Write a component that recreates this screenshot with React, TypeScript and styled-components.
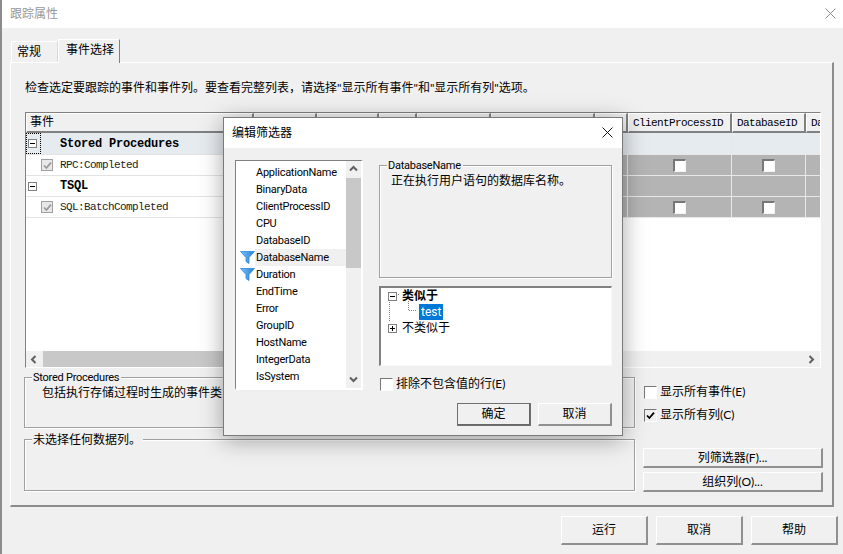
import React from 'react';
import styled, { createGlobalStyle } from 'styled-components';

const UI_FONT = `Lato, "Noto Sans CJK SC", sans-serif`;
const LATIN_FONT = `Roboto, sans-serif`;
const GRID_FONT = `"Liberation Mono", "Noto Sans CJK SC", monospace`;

const GlobalStyle = createGlobalStyle`
	html, body { margin: 0; padding: 0; background: #f0f0f0; overflow: hidden; }
	* { box-sizing: border-box; }
`;

const Page = styled.div`
	position: relative;
	width: 843px;
	height: 554px;
	background: #f0f0f0;
	border-left: 2px solid #8c8c8c;
	font: 12px/16px ${UI_FONT};
	color: #000;
	overflow: hidden;
`;

const TitleBar = styled.div`
	height: 28px;
	background: #fff;
	display: flex;
	align-items: center;
	justify-content: space-between;
	padding: 0 7px 1px 8px;
	color: #999;
`;

const TabStrip = styled.div`
	height: 34px;
	display: flex;
	align-items: flex-end;
	padding-left: 9px;
`;

const Tab = styled.div<{ $active?: boolean }>`
	position: relative;
	width: ${({ $active }) => ($active ? '62px' : '47px')};
	height: ${({ $active }) => ($active ? '24px' : '21px')};
	margin-bottom: ${({ $active }) => ($active ? '-1px' : '0')};
	padding: ${({ $active }) => ($active ? '2px 0 0 7px' : '2px 0 0 5px')};
	background: #f0f0f0;
	border-top: 1px solid #fff;
	border-left: 1px solid #fff;
	border-right: 1px solid ${({ $active }) => ($active ? '#808080' : '#d8d8d8')};
	z-index: ${({ $active }) => ($active ? 1 : 0)};
`;

const TabPanel = styled.div`
	width: 824px;
	height: 445px;
	margin-left: 8px;
	padding: 17px 0 0 14px;
	border-top: 1px solid #fff;
	border-left: 1px solid #fff;
	border-right: 2px solid #8c8c8c;
	border-bottom: 2px solid #8c8c8c;
	display: flex;
	flex-direction: column;
`;

const Description = styled.div`
	height: 16px;
	margin-bottom: 16px;
`;

const EventGrid = styled.div`
	width: 796px;
	height: 256px;
	border-top: 1px solid #808080;
	border-left: 1px solid #808080;
	border-right: 1px solid #fff;
	border-bottom: 1px solid #fff;
	background: #fff;
	display: flex;
	flex-direction: column;
	overflow: hidden;
	flex: none;
`;

const GridBody = styled.div`
	flex: 1;
	font: 11px/16px ${GRID_FONT};
	letter-spacing: -0.6px;
	overflow: hidden;
`;

const HeaderRow = styled.div`
	display: flex;
	height: 20px;
`;

const HeaderCell = styled.div<{ $w: number }>`
	flex: none;
	width: ${({ $w }) => $w}px;
	padding: 1px 0 0 4px;
	background: #f0f0f0;
	border-top: 1px solid #fff;
	border-left: 1px solid #fff;
	border-right: 2px solid #808080;
	border-bottom: 2px solid #808080;
	white-space: nowrap;
	overflow: hidden;
`;

const EventHeader = styled(HeaderCell)`
	font: 12px/16px ${UI_FONT};
	letter-spacing: 0;
	padding: 0 0 0 3px;
`;

const Row = styled.div<{ $tall?: boolean }>`
	display: flex;
	height: ${({ $tall }) => ($tall ? '22px' : '21px')};
`;

const NameCell = styled.div<{ $w: number; $selected?: boolean }>`
	position: relative;
	flex: none;
	width: ${({ $w }) => $w}px;
	display: flex;
	align-items: center;
	background: ${({ $selected }) => ($selected ? '#e6ebf0' : '#fff')};
	border-bottom: 1px solid #e3e3e3;
`;

const DataCell = styled.div<{ $w: number; $tone: 'selected' | 'shaded' }>`
	flex: none;
	width: ${({ $w }) => $w}px;
	display: flex;
	align-items: center;
	justify-content: center;
	background: ${({ $tone }) => ($tone === 'selected' ? '#e6ebf0' : '#b4b4b4')};
	border-bottom: 1px solid #e8e8e8;
	border-right: 1px solid #e8e8e8;
`;

const GroupName = styled.span`
	margin-left: 23px;
	font: bold 12px/16px ${GRID_FONT};
	letter-spacing: -0.2px;
`;

const EventName = styled.span`
	margin-left: 7px;
	color: #222;
`;

const Expander = styled.span`
	flex: none;
	width: 9px;
	height: 9px;
	margin-left: 2px;
	border: 1px solid #808080;
	background: #fff;
	display: flex;
	align-items: center;
	justify-content: center;
	&::before {
		content: '';
		width: 5px;
		height: 1px;
		background: #000;
	}
`;

const PlusExpander = styled(Expander)`
	position: relative;
	&::after {
		content: '';
		position: absolute;
		left: 3px;
		top: 1px;
		width: 1px;
		height: 5px;
		background: #000;
	}
`;

const FocusBox = styled.span`
	position: absolute;
	left: 0;
	top: 0;
	width: 15px;
	height: 100%;
	border: 1px dotted #000;
`;

const DisabledCheck = styled.span`
	flex: none;
	width: 12px;
	height: 12px;
	margin-left: 15px;
	border: 1px solid #a0a0a0;
	background: #e8e8e8;
	display: flex;
	align-items: center;
	justify-content: center;
`;

const CellCheck = styled.span`
	width: 13px;
	height: 13px;
	background: #fff;
	border-top: 2px solid #777;
	border-left: 2px solid #777;
	border-right: 1px solid #f4f4f4;
	border-bottom: 1px solid #f4f4f4;
`;

const HScroll = styled.div`
	flex: none;
	height: 16px;
	display: flex;
	align-items: center;
	justify-content: space-between;
	background: #f0f0f0;
`;

const HThumb = styled.div`
	width: 560px;
	height: 16px;
	background: #c8c8c8;
`;

const ScrollArrow = styled.span`
	flex: none;
	width: 17px;
	height: 16px;
	display: flex;
	align-items: center;
	justify-content: center;
`;

const HScrollStart = styled.div`
	display: flex;
	align-items: center;
`;

const Lower = styled.div`
	display: flex;
	margin-top: 9px;
	margin-left: -1px;
`;

const LowerLeft = styled.div`
	width: 611px;
	display: flex;
	flex-direction: column;
	gap: 11px;
`;

const GroupBox = styled.div<{ $h: number; $inset?: number }>`
	position: relative;
	height: ${({ $h }) => $h}px;
	border: 1px solid #a0a0a0;
	box-shadow: 1px 1px 0 #fff, inset 1px 1px 0 #fff;
	padding: 7px 0 0 ${({ $inset }) => $inset ?? 17}px;
`;

const Legend = styled.span<{ $latin?: boolean }>`
	position: absolute;
	left: 7px;
	top: -8px;
	padding: 0 2px 0 1px;
	background: #f0f0f0;
	white-space: nowrap;
	font-family: ${({ $latin }) => ($latin ? LATIN_FONT : UI_FONT)};
	font-size: ${({ $latin }) => ($latin ? '11px' : '12px')};
	letter-spacing: ${({ $latin }) => ($latin ? '-0.25px' : '0')};
`;

const LowerRight = styled.div`
	width: 180px;
	margin-left: 8px;
	display: flex;
	flex-direction: column;
`;

const CheckRow = styled.label`
	display: flex;
	align-items: center;
	gap: 3px;
	height: 16px;
	white-space: nowrap;
`;

const RightChecks = styled.div`
	display: flex;
	flex-direction: column;
	gap: 7px;
	margin: 7px 0 0 1px;
`;

const CheckBox = styled.span<{ $checked?: boolean }>`
	flex: none;
	width: 13px;
	height: 13px;
	background: ${({ $checked }) => ($checked ? '#f0f0f0' : '#fff')};
	border-top: 1px solid #777;
	border-left: 1px solid #777;
	border-right: 1px solid #fff;
	border-bottom: 1px solid #fff;
	display: flex;
	align-items: center;
	justify-content: center;
`;

const Button = styled.div<{ $default?: boolean }>`
	display: flex;
	align-items: center;
	justify-content: center;
	background: #f0f0f0;
	border-top: 1px solid #fff;
	border-left: 1px solid #fff;
	border-right: 2px solid ${({ $default }) => ($default ? '#666' : '#909090')};
	border-bottom: 2px solid ${({ $default }) => ($default ? '#666' : '#909090')};
	outline: ${({ $default }) => ($default ? '1px solid #707070' : 'none')};
	outline-offset: -1px;
`;

const WideButton = styled(Button)`
	height: 20px;
`;

const WideButtons = styled.div`
	display: flex;
	flex-direction: column;
	gap: 4px;
	margin-top: 25px;
`;

const Footer = styled.div`
	display: flex;
	justify-content: flex-end;
	gap: 8px;
	padding: 9px 5px 0 0;
`;

const FooterButton = styled(Button)`
	width: 87px;
	height: 29px;
`;

/* dialog floating over the properties window */
const Dialog = styled.div`
	position: absolute;
	left: 221px;
	top: 117px;
	width: 400px;
	height: 319px;
	background: #f0f0f0;
	border: 1px solid #7a7a7a;
	box-shadow: 0 4px 22px rgba(0, 0, 0, 0.35);
	display: flex;
	flex-direction: column;
`;

const DialogTitle = styled.div`
	flex: none;
	height: 30px;
	padding: 0 9px 1px 8px;
	background: #fff;
	display: flex;
	align-items: center;
	justify-content: space-between;
`;

const DialogBody = styled.div`
	display: flex;
	gap: 16px;
	padding: 12px 0 0 11px;
`;

const FieldList = styled.div`
	width: 128px;
	height: 230px;
	display: flex;
	background: #fff;
	border-top: 1px solid #808080;
	border-left: 1px solid #808080;
	border-right: 2px solid #fff;
	border-bottom: 2px solid #fff;
	flex: none;
`;

const FieldItems = styled.div`
	width: 110px;
	padding-top: 3px;
	flex: none;
`;

const FieldItem = styled.div`
	display: flex;
	align-items: center;
	height: 17px;
`;

const FieldIconSlot = styled.span`
	flex: none;
	width: 19px;
	height: 17px;
	display: flex;
	align-items: center;
	justify-content: center;
	padding-left: 4px;
`;

const FieldLabel = styled.span<{ $active?: boolean }>`
	flex: 1;
	height: 17px;
	padding-left: 1px;
	font: 11px/17px ${LATIN_FONT};
	letter-spacing: -0.25px;
	background: ${({ $active }) => ($active ? '#f0f0f0' : 'transparent')};
	white-space: nowrap;
`;

const VScroll = styled.div`
	width: 15px;
	background: #f0f0f0;
	display: flex;
	flex-direction: column;
	align-items: stretch;
`;

const VThumb = styled.div`
	height: 90px;
	background: #c8c8c8;
`;

const VSpacer = styled.div`
	flex: 1;
`;

const VArrow = styled.span`
	flex: none;
	height: 17px;
	display: flex;
	align-items: center;
	justify-content: center;
`;

const RightPane = styled.div`
	width: 233px;
	flex: none;
	display: flex;
	flex-direction: column;
	padding-top: 5px;
`;

const Tree = styled.div`
	position: relative;
	height: 80px;
	margin-top: 8px;
	padding: 0 0 0 5px;
	background: #fff;
	border-top: 2px solid #808080;
	border-left: 2px solid #808080;
	border-right: 1px solid #f8f8f8;
	border-bottom: 1px solid #f8f8f8;
`;

const TreeLines = styled.svg`
	position: absolute;
	left: 0;
	top: 0;
`;

const TreeRow = styled.div<{ $indent?: number }>`
	position: relative;
	display: flex;
	align-items: center;
	height: 16px;
	padding-left: ${({ $indent }) => $indent ?? 0}px;
`;

const TreeLabel = styled.span<{ $bold?: boolean; $selected?: boolean }>`
	margin-left: ${({ $selected }) => ($selected ? '0' : '5px')};
	padding: ${({ $selected }) => ($selected ? '0 2px' : '0')};
	font-weight: ${({ $bold }) => ($bold ? 700 : 400)};
	font-family: ${({ $selected }) => ($selected ? LATIN_FONT : UI_FONT)};
	background: ${({ $selected }) => ($selected ? '#0078d7' : 'transparent')};
	color: ${({ $selected }) => ($selected ? '#fff' : '#000')};
`;

const DialogCheck = styled.div`
	margin: 10px 0 0 1px;
`;

const DialogButtons = styled.div`
	display: flex;
	justify-content: flex-end;
	gap: 7px;
	margin-top: 11px;
`;

const DialogButton = styled(Button)`
	width: 74px;
	height: 23px;
`;

const Close = ({ size, color }: { size: number; color: string }) => (
	<svg width={size} height={size} viewBox="0 0 10 10">
		<path d="M0.5 0.5 L9.5 9.5 M9.5 0.5 L0.5 9.5" stroke={color} strokeWidth="0.9" fill="none" />
	</svg>
);

const Tick = ({ color }: { color: string }) => (
	<svg width="9" height="9" viewBox="0 0 9 9">
		<path d="M1 4.5 L3.4 7 L8 1.6" stroke={color} strokeWidth="1.8" fill="none" />
	</svg>
);

const Chevron = ({ dir }: { dir: 'left' | 'right' | 'up' | 'down' }) => {
	const paths = {
		left: 'M5.5 1 L2 4.5 L5.5 8',
		right: 'M2.5 1 L6 4.5 L2.5 8',
		up: 'M1 5.5 L4.5 2 L8 5.5',
		down: 'M1 2.5 L4.5 6 L8 2.5',
	};
	return (
		<svg width="9" height="9" viewBox="0 0 9 9">
			<path d={paths[dir]} stroke="#606060" strokeWidth="2" fill="none" />
		</svg>
	);
};

const Funnel = () => (
	<svg width="15" height="13" viewBox="0 0 15 13">
		<defs>
			<linearGradient id="funnel" x1="0" x2="1" y1="0" y2="0">
				<stop offset="0" stopColor="#7fc0f5" />
				<stop offset="1" stopColor="#1f7fdc" />
			</linearGradient>
		</defs>
		<path d="M0.5 0.5 H14.5 L9 6.5 V12.5 L6 10.5 V6.5 Z" fill="url(#funnel)" stroke="#2f86dc" strokeWidth="0.8" />
	</svg>
);

const columns = [228, 63, 62, 38, 74, 104, 33, 104, 74, 60];
const columnLabels = ['', '', '', '', '', '', '', 'ClientProcessID', 'DatabaseID', 'DatabaseName'];
const checkedColumns = [7, 8];

const fields = [
	'ApplicationName',
	'BinaryData',
	'ClientProcessID',
	'CPU',
	'DatabaseID',
	'DatabaseName',
	'Duration',
	'EndTime',
	'Error',
	'GroupID',
	'HostName',
	'IntegerData',
	'IsSystem',
];
const filteredFields = ['DatabaseName', 'Duration'];

const DataCells = ({ tone, checks }: { tone: 'selected' | 'shaded'; checks?: boolean }) => (
	<>
		{columns.slice(1).map((w, i) => (
			<DataCell key={i} $w={w} $tone={tone}>
				{checks && checkedColumns.includes(i + 1) && <CellCheck />}
			</DataCell>
		))}
	</>
);

const App = () => {
	return (
		<Page>
			<GlobalStyle />
			<TitleBar>
				<span>跟踪属性</span>
				<Close size={11} color="#8a8a8a" />
			</TitleBar>
			<TabStrip>
				<Tab>常规</Tab>
				<Tab $active>事件选择</Tab>
			</TabStrip>
			<TabPanel>
				<Description>检查选定要跟踪的事件和事件列。要查看完整列表，请选择"显示所有事件"和"显示所有列"选项。</Description>
				<EventGrid>
					<GridBody>
						<HeaderRow>
							<EventHeader $w={columns[0]}>事件</EventHeader>
							{columns.slice(1).map((w, i) => (
								<HeaderCell key={i} $w={w}>
									{columnLabels[i + 1]}
								</HeaderCell>
							))}
						</HeaderRow>
						<Row $tall>
							<NameCell $w={columns[0]} $selected>
								<FocusBox />
								<Expander />
								<GroupName>Stored Procedures</GroupName>
							</NameCell>
							<DataCells tone="selected" />
						</Row>
						<Row>
							<NameCell $w={columns[0]}>
								<DisabledCheck>
									<Tick color="#9a9a9a" />
								</DisabledCheck>
								<EventName>RPC:Completed</EventName>
							</NameCell>
							<DataCells tone="shaded" checks />
						</Row>
						<Row>
							<NameCell $w={columns[0]}>
								<Expander />
								<GroupName>TSQL</GroupName>
							</NameCell>
							<DataCells tone="shaded" />
						</Row>
						<Row>
							<NameCell $w={columns[0]}>
								<DisabledCheck>
									<Tick color="#9a9a9a" />
								</DisabledCheck>
								<EventName>SQL:BatchCompleted</EventName>
							</NameCell>
							<DataCells tone="shaded" checks />
						</Row>
					</GridBody>
					<HScroll>
						<HScrollStart>
							<ScrollArrow>
								<Chevron dir="left" />
							</ScrollArrow>
							<HThumb />
						</HScrollStart>
						<ScrollArrow>
							<Chevron dir="right" />
						</ScrollArrow>
					</HScroll>
				</EventGrid>
				<Lower>
					<LowerLeft>
						<GroupBox $h={51}>
							<Legend $latin>Stored Procedures</Legend>
							包括执行存储过程时生成的事件类
						</GroupBox>
						<GroupBox $h={52}>
							<Legend>未选择任何数据列。</Legend>
						</GroupBox>
					</LowerLeft>
					<LowerRight>
						<RightChecks>
							<CheckRow>
								<CheckBox />
								显示所有事件(E)
							</CheckRow>
							<CheckRow>
								<CheckBox $checked>
									<Tick color="#000" />
								</CheckBox>
								显示所有列(C)
							</CheckRow>
						</RightChecks>
						<WideButtons>
							<WideButton>列筛选器(F)...</WideButton>
							<WideButton>组织列(O)...</WideButton>
						</WideButtons>
					</LowerRight>
				</Lower>
			</TabPanel>
			<Footer>
				<FooterButton>运行</FooterButton>
				<FooterButton>取消</FooterButton>
				<FooterButton>帮助</FooterButton>
			</Footer>
			<Dialog>
				<DialogTitle>
					<span>编辑筛选器</span>
					<Close size={11} color="#111" />
				</DialogTitle>
				<DialogBody>
					<FieldList>
						<FieldItems>
							{fields.map((name) => (
								<FieldItem key={name}>
									<FieldIconSlot>{filteredFields.includes(name) && <Funnel />}</FieldIconSlot>
									<FieldLabel $active={name === 'DatabaseName'}>{name}</FieldLabel>
								</FieldItem>
							))}
						</FieldItems>
						<VScroll>
							<VArrow>
								<Chevron dir="up" />
							</VArrow>
							<VThumb />
							<VSpacer />
							<VArrow>
								<Chevron dir="down" />
							</VArrow>
						</VScroll>
					</FieldList>
					<RightPane>
						<GroupBox $h={113} $inset={11}>
							<Legend $latin>DatabaseName</Legend>
							正在执行用户语句的数据库名称。
						</GroupBox>
						<Tree>
							<TreeLines width="60" height="50" viewBox="0 0 60 50">
								<path
									d="M8.5 10 V34 M13 6.5 H19 M27.5 13 V22.5 H36"
									stroke="#808080"
									strokeDasharray="1 1"
									fill="none"
								/>
							</TreeLines>
							<TreeRow>
								<Expander />
								<TreeLabel $bold>类似于</TreeLabel>
							</TreeRow>
							<TreeRow $indent={33}>
								<TreeLabel $selected>test</TreeLabel>
							</TreeRow>
							<TreeRow>
								<PlusExpander />
								<TreeLabel>不类似于</TreeLabel>
							</TreeRow>
						</Tree>
						<DialogCheck>
							<CheckRow>
								<CheckBox />
								排除不包含值的行(E)
							</CheckRow>
						</DialogCheck>
						<DialogButtons>
							<DialogButton $default>确定</DialogButton>
							<DialogButton>取消</DialogButton>
						</DialogButtons>
					</RightPane>
				</DialogBody>
			</Dialog>
		</Page>
	);
};

export default App;
